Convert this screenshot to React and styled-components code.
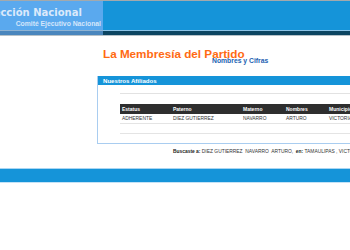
import React from "react";
import styled, { createGlobalStyle } from "styled-components";

const GlobalStyle = createGlobalStyle`
  html, body {
    margin: 0;
    padding: 0;
    background: #ffffff;
    overflow: hidden;
  }
  body {
    font-family: "Liberation Sans", Arial, sans-serif;
  }
`;

const Page = styled.div`
  width: 700px;
  height: 250px;
  overflow: hidden;
`;

const Header = styled.div`
  border-top: 1px solid #a3a9ad;
`;

const HeaderBar = styled.div`
  display: flex;
  height: 29px;
  background: #1594d9;
`;

const Brand = styled.div`
  width: 103px;
  background: #5aa9ee;
  overflow: hidden;
  display: flex;
  flex-direction: column;
  align-items: flex-end;
`;

const BrandTitle = styled.div`
  align-self: flex-start;
  margin-left: -23px;
  margin-top: 5px;
  font-family: "DejaVu Sans", Verdana, sans-serif;
  font-size: 10px;
  line-height: 13px;
  font-weight: 700;
  color: #dce9fb;
  white-space: nowrap;
`;

const BrandSub = styled.div`
  margin-right: 2px;
  margin-top: 1px;
  font-size: 6.8px;
  line-height: 8px;
  font-weight: 700;
  color: #d4e6fb;
  white-space: nowrap;
`;

const HeaderStrip = styled.div`
  display: flex;
  height: 5px;
  border-bottom: 1px solid #b7c2c9;
`;

const StripPart = styled.div`
  width: ${(p) => (p.$left ? "103px" : "auto")};
  flex: ${(p) => (p.$left ? "none" : "1")};
  border-top: 1px solid ${(p) => (p.$left ? "#8fb3d3" : "#8cc4e8")};
  background: ${(p) => (p.$left ? "#4a86bd" : "#0c4562")};
`;

const Content = styled.div`
  padding-left: 97px;
`;

const Title = styled.div`
  margin-top: 11px;
  margin-left: 6px;
  font-size: 11.7px;
  line-height: 13px;
  font-weight: 700;
  color: #ff6a13;
  white-space: nowrap;
`;

const Subtitle = styled.div`
  margin-top: -3px;
  margin-left: 115px;
  font-size: 6.8px;
  line-height: 8px;
  font-weight: 700;
  color: #1c5fb2;
  white-space: nowrap;
`;

const Panel = styled.div`
  margin-top: 11px;
  width: 600px;
  border: 1px solid #a9cdf0;
  border-top: none;
  height: 67px;
`;

const PanelHead = styled.div`
  height: 9px;
  line-height: 9px;
  padding-left: 5px;
  background: #1594d9;
  color: #ffffff;
  font-size: 6.1px;
  font-weight: 700;
`;

const PanelBody = styled.div`
  padding: 8px 0 0 22px;
`;

const Rule = styled.div`
  height: 0;
  border-top: 1px solid #e2e2e2;
  margin-bottom: 10px;
`;

const Table = styled.div`
  display: grid;
  grid-template-columns: 51px 70px 43px 43px 200px;
`;

const HeadCell = styled.div`
  height: 10px;
  line-height: 10px;
  padding-left: 2px;
  background: #2e2e2e;
  color: #ffffff;
  font-size: 5px;
  font-weight: 700;
  white-space: nowrap;
`;

const Cell = styled.div`
  height: 9px;
  line-height: 9px;
  padding-left: 2px;
  border-bottom: 1px solid #e4e4e4;
  color: #333333;
  font-size: 4.9px;
  white-space: nowrap;
`;

const Search = styled.div`
  margin-top: 5px;
  padding-left: 76px;
  font-size: 4.9px;
  line-height: 6px;
  color: #333333;
  white-space: pre;
`;

const Strong = styled.b`
  font-weight: 700;
  color: #222222;
`;

const Footer = styled.div`
  margin-top: 13px;
  height: 13px;
  background: #1594d9;
  border-top: 1px solid #a9d6f3;
  border-bottom: 1px solid #c4e2f6;
`;

const columns = ["Estatus", "Paterno", "Materno", "Nombres", "Municipio"];
const row = ["ADHERENTE", "DIEZ GUTIERREZ", "NAVARRO", "ARTURO", "VICTORIA"];

export default function App() {
  return (
    <Page>
      <GlobalStyle />
      <Header>
        <HeaderBar>
          <Brand>
            <BrandTitle>Dirección Nacional</BrandTitle>
            <BrandSub>Comité Ejecutivo Nacional</BrandSub>
          </Brand>
        </HeaderBar>
        <HeaderStrip>
          <StripPart $left />
          <StripPart />
        </HeaderStrip>
      </Header>
      <Content>
        <Title>La Membresía del Partido</Title>
        <Subtitle>Nombres y Cifras</Subtitle>
        <Panel>
          <PanelHead>Nuestros Afiliados</PanelHead>
          <PanelBody>
            <Rule />
            <Table>
              {columns.map((c) => (
                <HeadCell key={c}>{c}</HeadCell>
              ))}
              {row.map((c, i) => (
                <Cell key={i}>{c}</Cell>
              ))}
              {row.map((_, i) => (
                <Cell key={"e" + i} />
              ))}
            </Table>
          </PanelBody>
        </Panel>
        <Search>
          <Strong>Buscaste a:</Strong> DIEZ GUTIERREZ  NAVARRO  ARTURO,  <Strong>en:</Strong> TAMAULIPAS , VICTORIA
        </Search>
      </Content>
      <Footer />
    </Page>
  );
}
